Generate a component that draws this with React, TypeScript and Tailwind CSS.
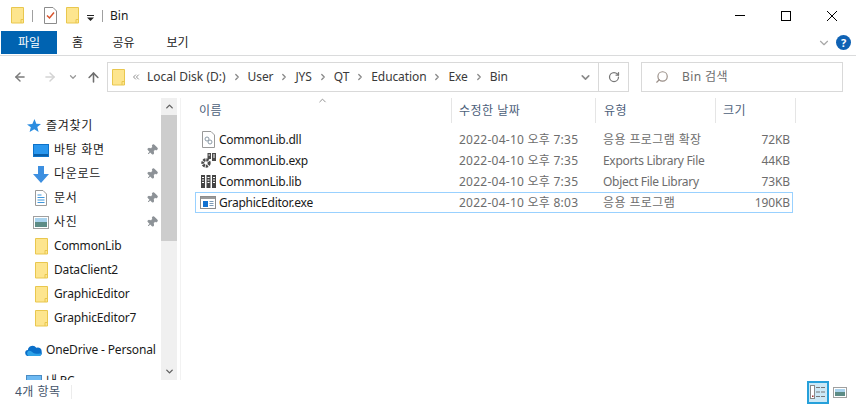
import React from 'react';
import { ChevronDown, ChevronUp, ChevronRight, ChevronsLeft, RotateCw, Search, ArrowLeft, ArrowRight, ArrowUp, Pin } from 'lucide-react';

const Folder: React.FC<{ className?: string }> = ({ className = '' }) => (
  <svg width="13" height="17" viewBox="0 0 13 17" className={className}>
    <path d="M.5.5h12v15.5H.5z" fill="#fde58e" stroke="#e9c74e" />
    <path d="M10 16V12.5H12.5" fill="none" stroke="#e9c74e" />
  </svg>
);

const ChecklistIcon = () => (
  <svg width="13" height="17" viewBox="0 0 13 17">
    <path d="M.5.5h8.5l3.5 3.5v12.5H.5z" fill="#fff" stroke="#8c8c8c" />
    <path d="M3 8.5l2.5 2.5L10 5.5" fill="none" stroke="#d9532c" strokeWidth="1.5" />
  </svg>
);

const MonitorIcon = () => (
  <svg width="16" height="13" viewBox="0 0 16 13">
    <rect x=".5" y=".5" width="15" height="12" fill="#2a97ee" stroke="#0d72c9" />
    <path d="M1 11h14" stroke="#0b5fa8" strokeWidth="2" />
  </svg>
);

const DownloadIcon = () => (
  <svg width="16" height="17" viewBox="0 0 16 17">
    <path d="M5 0h6v8h5l-8 9-8-9h5z" fill="#3d8fe0" />
  </svg>
);

const DocIcon = () => (
  <svg width="12" height="16" viewBox="0 0 12 16">
    <path d="M.5.5h7.5l3.5 3.5v11.5H.5z" fill="#fff" stroke="#9a9a9a" />
    <path d="M2.5 5h4M2.5 7.5h7M2.5 10h7M2.5 12.5h7" stroke="#3f97dc" />
  </svg>
);

const PictureIcon = () => (
  <svg width="16" height="13" viewBox="0 0 16 13">
    <rect x=".5" y=".5" width="15" height="12" fill="#fff" stroke="#a0a0a0" />
    <rect x="2" y="2" width="12" height="4" fill="#a9d3ee" />
    <rect x="2" y="6" width="12" height="5" fill="#5d8c86" />
  </svg>
);

const StarIcon = () => (
  <svg width="15" height="14" viewBox="0 0 15 14">
    <path d="M8.5 0l1.8 4.7 4.7.3-3.7 3 1.3 5-4.3-2.8L3.6 13l1.2-4.7L1 5.5l5.3-.4z" fill="#2b8de0" />
  </svg>
);

const CloudIcon = () => (
  <svg width="17" height="11" viewBox="0 0 17 11">
    <path d="M3.5 11a3 3 0 0 1-.6-6A4.6 4.6 0 0 1 11.3 2.8 3.8 3.8 0 0 1 16.6 7 2.9 2.9 0 0 1 14.5 11z" fill="#0a6fc9" />
    <path d="M3.5 11a3 3 0 0 1 .2-5.2c2-.6 3 1 4.8 2.2 2 1.2 3.5.6 8 .4A2.9 2.9 0 0 1 14.5 11z" fill="#2ea3e8" />
  </svg>
);

const PcIcon = () => (
  <svg width="16" height="13" viewBox="0 0 16 13">
    <rect x=".5" y=".5" width="15" height="12" fill="#6db9f2" stroke="#4a8cc4" />
  </svg>
);

const DllIcon = () => (
  <svg width="13" height="17" viewBox="0 0 13 17">
    <path d="M.5.5h8.5l3.5 3.5v12.5H.5z" fill="#fff" stroke="#9a9a9a" />
    <circle cx="5" cy="8" r="2" fill="none" stroke="#8b9aa6" />
    <circle cx="8" cy="11" r="2" fill="none" stroke="#8b9aa6" />
  </svg>
);

const ExpIcon = () => (
  <svg width="15" height="15" viewBox="0 0 15 15">
    <circle cx="5" cy="10" r="3.2" fill="none" stroke="#4b4b4b" strokeWidth="3" strokeDasharray="2.2 .8" />
    <rect x="6.5" y="0" width="3.5" height="6" fill="#4b4b4b" />
    <rect x="11" y="0" width="4" height="8" fill="#4b4b4b" />
    <path d="M7.5 2h1.5M12 2h2M12 4h2" stroke="#fff" />
  </svg>
);

const LibIcon = () => (
  <svg width="15" height="15" viewBox="0 0 15 15">
    <rect x="0" y="1" width="4" height="13" fill="#444" />
    <rect x="5.5" y="1" width="4" height="13" fill="#444" />
    <rect x="11" y="1" width="4" height="13" fill="#444" />
    <path d="M1 3.5h2M1 6h2M1 8.5h2M6.5 3.5h2M6.5 6h2M6.5 8.5h2M12 3.5h2M12 6h2M12 8.5h2" stroke="#fff" />
  </svg>
);

const ExeIcon = () => (
  <svg width="16" height="13" viewBox="0 0 16 13">
    <rect x=".5" y=".5" width="15" height="12" fill="#fff" stroke="#8c8c8c" />
    <path d="M1 2h14" stroke="#9a9a9a" strokeWidth="2" />
    <rect x="3" y="5" width="5" height="6" fill="#1170cf" />
    <path d="M9.5 5.5h4M9.5 7.5h4M9.5 9.5h4" stroke="#7e9bb5" />
  </svg>
);

const NavRow: React.FC<{ icon: React.ReactNode; label: string; pin?: boolean; top?: boolean; ko?: boolean }> = ({ icon, label, pin, top, ko }) => (
  <div className={`h-6 shrink-0 flex items-center text-[#1a1a1a] ${top ? 'pl-[25px]' : 'pl-[33px]'}`}>
    <span className={`flex items-center justify-center ${top ? 'w-[17px]' : 'w-4'}`}>{icon}</span>
    <span className={`${top ? 'ml-1' : 'ml-[5px]'} ${ko ? 'tracking-[0.7px]' : 'tracking-[-0.15px]'}`}>{label}</span>
    {pin && <Pin size={12} className="ml-auto mr-[3px] text-[#8d9297] rotate-45" fill="#8d9297" />}
  </div>
);

const crumbs = ['User', 'JYS', 'QT', 'Education', 'Exe', 'Bin'];

const files = [
  { icon: <DllIcon />, name: 'CommonLib.dll', date: '2022-04-10 오후 7:35', type: '응용 프로그램 확장', size: '72KB', ko: true },
  { icon: <ExpIcon />, name: 'CommonLib.exp', date: '2022-04-10 오후 7:35', type: 'Exports Library File', size: '44KB' },
  { icon: <LibIcon />, name: 'CommonLib.lib', date: '2022-04-10 오후 7:35', type: 'Object File Library', size: '73KB' },
  { icon: <ExeIcon />, name: 'GraphicEditor.exe', date: '2022-04-10 오후 8:03', type: '응용 프로그램', size: '190KB', selected: true, ko: true },
];

const App: React.FC = () => {
  return (
    <div className="w-[856px] h-[404px] bg-white overflow-hidden flex flex-col text-[12px] leading-4 font-['Noto_Sans','Noto_Sans_CJK_KR',sans-serif]">
      {/* title bar */}
      <div className="h-[31px] shrink-0 flex items-center pl-[11px]">
        <Folder />
        <div className="w-px h-3 bg-[#a0a0a0] ml-2" />
        <div className="ml-[11px] flex"><ChecklistIcon /></div>
        <div className="ml-[9px] flex"><Folder /></div>
        <svg width="7" height="6" viewBox="0 0 7 6" className="ml-2 mt-1">
          <path d="M0 .5h7" stroke="#222" />
          <path d="M0 2.5h7L3.5 6z" fill="#222" />
        </svg>
        <div className="w-px h-3 bg-[#a0a0a0] ml-2" />
        <span className="ml-[7px] text-[#1a1a1a]">Bin</span>
        <div className="ml-auto flex items-center">
          <div className="w-[46px] flex justify-center"><div className="w-[10px] h-px bg-black" /></div>
          <div className="w-[46px] flex justify-center"><div className="w-[10px] h-[10px] border border-black" /></div>
          <div className="w-[46px] flex justify-center">
            <svg width="10" height="10" viewBox="0 0 10 10"><path d="M0 0l10 10M10 0L0 10" stroke="#000" /></svg>
          </div>
          <div className="w-px" />
        </div>
      </div>

      {/* ribbon tabs */}
      <div className="h-[25px] shrink-0 flex border-b border-[#dadbdc] pb-px">
        <div className="ml-px w-[56px] h-[23px] bg-[#0063b1] text-white flex items-center justify-center">파일</div>
        <div className="w-[41px] flex items-center justify-center text-[#1a1a1a] h-[23px]">홈</div>
        <div className="w-[53px] flex items-center justify-center text-[#1a1a1a] h-[23px] ml-[-1px]">공유</div>
        <div className="w-[53px] flex items-center justify-center text-[#1a1a1a] h-[23px] ml-[1px]">보기</div>
        <div className="ml-auto flex items-center h-[23px] pr-[5px]">
          <ChevronDown size={14} className="text-[#a8a8a8]" />
          <div className="ml-[5px] w-[15px] h-[15px] rounded-full bg-[#0f62b4] text-white text-[11px] font-bold flex items-center justify-center">?</div>
        </div>
      </div>

      {/* address bar */}
      <div className="h-[42px] shrink-0 flex items-center">
        <div className="w-[107px] flex items-center pl-[13px] shrink-0">
          <ArrowLeft size={14} strokeWidth={2.5} className="text-[#7b7b7b]" />
          <ArrowRight size={14} strokeWidth={2.5} className="ml-4 text-[#d3d3d3]" />
          <ChevronDown size={10} strokeWidth={3} className="ml-[11px] text-[#9a9a9a]" />
          <ArrowUp size={15} strokeWidth={2.5} className="ml-2 text-[#6f6f6f]" />
        </div>
        <div className="w-[522px] h-[30px] border border-[#d9d9d9] flex items-center pl-1 text-[#3a3a3a]">
          <Folder />
          <ChevronsLeft size={10} className="ml-[6px] text-[#777]" />
          <span className="ml-[6px]">Local Disk (D:)</span>
          {crumbs.map((c) => (
            <React.Fragment key={c}>
              <ChevronRight size={10} strokeWidth={3} className="mx-[6px] text-[#888]" />
              <span className="tracking-[-0.1px]">{c}</span>
            </React.Fragment>
          ))}
          <ChevronDown size={13} strokeWidth={3} className="ml-auto mr-[6px] text-[#8a8a8a]" />
          <div className="w-[30px] h-full border-l border-[#d9d9d9] flex items-center justify-center">
            <RotateCw size={12} strokeWidth={2.5} className="text-[#777]" />
          </div>
        </div>
        <div className="ml-3 w-[202px] h-[30px] border border-[#d9d9d9] flex items-center pl-[13px] text-[#6d6d6d]">
          <Search size={14} className="text-[#9a8f88] -scale-x-100" />
          <span className="ml-[13px] tracking-[0.4px]">Bin 검색</span>
        </div>
      </div>

      <div className="flex-1 min-h-0 flex">
        {/* nav pane */}
        <div className="w-[161px] shrink-0 pt-4 overflow-hidden flex flex-col">
          <NavRow top ko icon={<StarIcon />} label="즐겨찾기" />
          <NavRow ko icon={<MonitorIcon />} label="바탕 화면" pin />
          <NavRow ko icon={<DownloadIcon />} label="다운로드" pin />
          <NavRow ko icon={<DocIcon />} label="문서" pin />
          <NavRow ko icon={<PictureIcon />} label="사진" pin />
          <NavRow icon={<Folder />} label="CommonLib" />
          <NavRow icon={<Folder />} label="DataClient2" />
          <NavRow icon={<Folder />} label="GraphicEditor" />
          <NavRow icon={<Folder />} label="GraphicEditor7" />
          <div className="h-2 shrink-0" />
          <NavRow top icon={<CloudIcon />} label="OneDrive - Personal" />
          <div className="h-[7px] shrink-0" />
          <NavRow top icon={<PcIcon />} label="내 PC" />
        </div>

        {/* scrollbar */}
        <div className="w-[16px] shrink-0 bg-[#f0f0f0] flex flex-col">
          <div className="h-[17px] flex items-center justify-center">
            <ChevronUp size={11} strokeWidth={3} className="text-[#606060]" />
          </div>
          <div className="h-[126px] bg-[#cdcdcd]" />
          <div className="flex-1" />
          <div className="h-[17px] flex items-center justify-center">
            <ChevronDown size={11} strokeWidth={3} className="text-[#606060]" />
          </div>
        </div>
        <div className="w-[3px] shrink-0" />

        {/* file list */}
        <div className="flex-1 min-w-0 border-l border-[#f2f2f2] pl-[14px] flex flex-col">
          <div className="relative h-[25px] shrink-0 grid grid-cols-[257px_144px_120px_80px] text-[#4c607a]">
            <ChevronUp size={11} className="absolute left-[122px] -top-[3px] text-[#888]" />
            <div className="flex items-center pl-1 border-r border-[#e5e5e5] h-[25px] tracking-[0.5px]">이름</div>
            <div className="flex items-center pl-[7px] border-r border-[#e5e5e5] h-[25px] tracking-[0.5px]">수정한 날짜</div>
            <div className="flex items-center pl-2 border-r border-[#e5e5e5] h-[25px] tracking-[0.5px]">유형</div>
            <div className="flex items-center pl-[7px] border-r border-[#e5e5e5] h-[25px] tracking-[0.5px]">크기</div>
          </div>
          <div className="h-[6px] shrink-0" />
          {files.map((f) => (
            <div
              key={f.name}
              className={`w-[598px] h-[21px] shrink-0 grid grid-cols-[257px_144px_120px_77px] items-center ${f.selected ? 'border border-[#99d1ff]' : 'border border-transparent'}`}
            >
              <div className="flex items-center pl-1 text-[#1a1a1a]">
                <span className="w-4 flex items-center justify-center">{f.icon}</span>
                <span className="ml-[3px] tracking-[-0.25px]">{f.name}</span>
              </div>
              <div className="pl-[6px] text-[#6d6d6d] whitespace-nowrap tracking-[0.25px]">{f.date}</div>
              <div className={`pl-[6px] text-[#6d6d6d] whitespace-nowrap ${f.ko ? 'tracking-[0.4px]' : 'tracking-[-0.3px]'}`}>{f.type}</div>
              <div className="pr-[4px] text-right text-[#6d6d6d] tracking-[-0.1px]">{f.size}</div>
            </div>
          ))}
        </div>
      </div>

      {/* status bar */}
      <div className="h-6 shrink-0 flex items-center pl-[15px] text-[#44546a]">
        <span className="tracking-[0.5px]">4개 항목</span>
        <div className="ml-[10px] w-px h-[14px] bg-[#ececec]" />
        <div className="ml-auto mr-[9px] flex items-center">
          <div className="w-[22px] h-[23px] border-2 border-[#26a0da] bg-[#cbe8f6] flex items-center justify-center">
            <svg width="16" height="14" viewBox="0 0 16 14">
              <rect x=".5" y=".5" width="4" height="13" fill="#fff" stroke="#888" />
              <path d="M6 2.5h4M11 2.5h4M6 7h4M11 7h4M6 11.5h4M11 11.5h4" stroke="#777" />
              <rect x="2" y="10.5" width="1.5" height="1.5" fill="#a03030" />
            </svg>
          </div>
          <div className="ml-1 flex">
            <svg width="14" height="11" viewBox="0 0 14 11">
              <rect x=".5" y=".5" width="13" height="10" fill="#fff" stroke="#a0a0a0" />
              <rect x="2" y="2" width="10" height="3" fill="#a9d3ee" />
              <rect x="2" y="5" width="10" height="4" fill="#5d8c86" />
            </svg>
          </div>
        </div>
      </div>
    </div>
  );
};

export default App;
